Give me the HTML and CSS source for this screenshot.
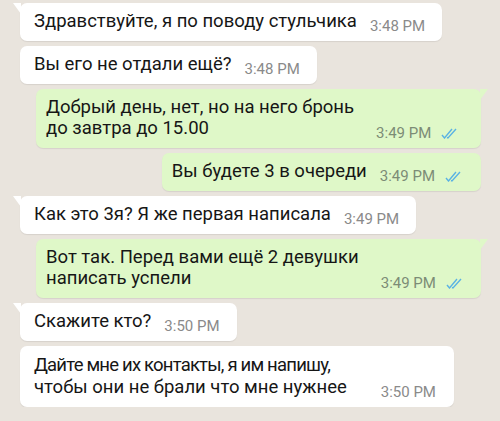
FILE: index.html
```html
<!DOCTYPE html>
<html>
<head>
    <title>Чат</title>
    <link rel="stylesheet" href="styles.css">
</head>
<body>
    <div class="chat">
        <div class="msg in tail">
            <span class="text">Здравствуйте, я по поводу стульчика</span>
            <span class="meta">3:48 PM</span>
        </div>
        <div class="msg in">
            <span class="text">Вы его не отдали ещё?</span>
            <span class="meta">3:48 PM</span>
        </div>
        <div class="msg out tail multi">
            <span class="text">Добрый день, нет, но на него бронь<br>до завтра до 15.00</span>
            <span class="meta">3:49 PM
                <svg class="ticks" viewBox="0 0 16 11"><path d="M1 7l2.5 3L11 1M6 9.5l1 0.5L15 1"/></svg>
            </span>
        </div>
        <div class="msg out">
            <span class="text">Вы будете 3 в очереди</span>
            <span class="meta">3:49 PM
                <svg class="ticks" viewBox="0 0 16 11"><path d="M1 7l2.5 3L11 1M6 9.5l1 0.5L15 1"/></svg>
            </span>
        </div>
        <div class="msg in tail">
            <span class="text">Как это 3я? Я же первая написала</span>
            <span class="meta">3:49 PM</span>
        </div>
        <div class="msg out tail multi">
            <span class="text">Вот так. Перед вами ещё 2 девушки<br>написать успели</span>
            <span class="meta">3:49 PM
                <svg class="ticks" viewBox="0 0 16 11"><path d="M1 7l2.5 3L11 1M6 9.5l1 0.5L15 1"/></svg>
            </span>
        </div>
        <div class="msg in tail">
            <span class="text">Скажите кто?</span>
            <span class="meta">3:50 PM</span>
        </div>
        <div class="msg in multi last">
            <span class="text"><span class="tight">Дайте мне их контакты, я им напишу,</span><br>чтобы они не брали что мне нужнее</span>
            <span class="meta">3:50 PM</span>
        </div>
    </div>
</body>
</html>
```

FILE: styles.css
```css
body {
    margin: 0;
    background-color: #e9e4dd;
    font-family: Roboto, "Noto Sans", sans-serif;
    color: #161616;
}

.chat {
    display: flex;
    flex-direction: column;
    gap: 5px;
    padding: 3px 19px 0 20px;
}

.msg {
    position: relative;
    display: flex;
    align-items: flex-end;
    gap: 13px;
    padding: 8px 17px 9px 14px;
    border-radius: 7px;
    box-shadow: 0 1px 1px rgba(0, 0, 0, 0.08);
}

.msg.multi {
    gap: 22px;
}

.msg.in {
    align-self: flex-start;
    background-color: #ffffff;
}

.msg.out {
    align-self: flex-end;
    background-color: #dff8c8;
    padding-left: 10px;
    padding-right: 20px;
}

.msg.out.multi {
    align-self: stretch;
    margin-left: 16px;
    justify-content: space-between;
    padding-right: 24px;
}

.text {
    flex-shrink: 0;
    white-space: nowrap;
    font-size: 18.5px;
    line-height: 21px;
}

.msg.last {
    gap: 34px;
    padding-right: 18px;
}

.msg.last .text {
    line-height: 22px;
}

.tight {
    letter-spacing: -0.8px;
}

.meta {
    display: flex;
    align-items: center;
    gap: 10px;
    font-size: 15px;
    line-height: 16px;
    color: #8a8a8a;
    white-space: nowrap;
    margin-bottom: -2px;
}

.out .meta {
    color: #7c8c76;
}

.ticks {
    width: 16px;
    height: 11px;
    fill: none;
    stroke: #5ab2e4;
    stroke-width: 1.4;
}

/* bubble tails */
.msg.in.tail::before {
    content: "";
    position: absolute;
    top: 0;
    left: -7px;
    border-top: 11px solid #ffffff;
    border-left: 8px solid transparent;
}

.msg.out.tail::before {
    content: "";
    position: absolute;
    top: 0;
    right: -7px;
    border-top: 11px solid #dff8c8;
    border-right: 8px solid transparent;
}
```
